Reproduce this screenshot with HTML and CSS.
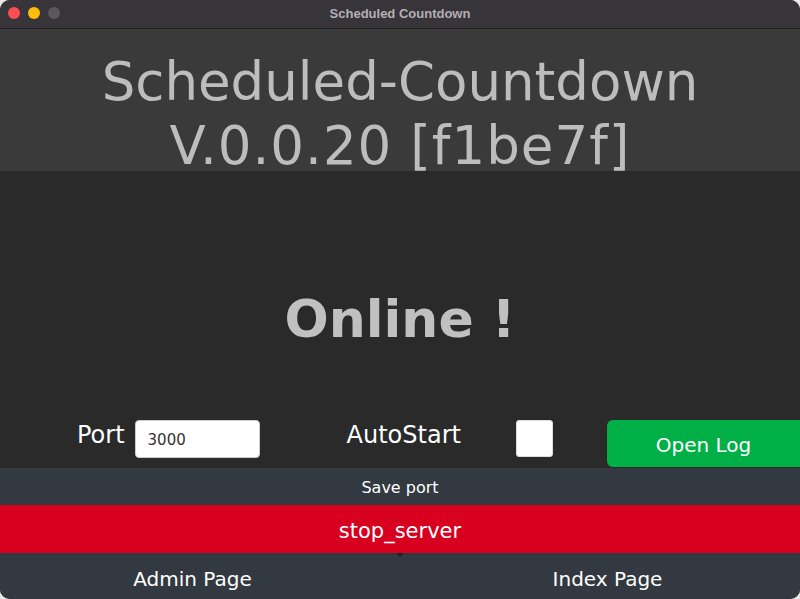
FILE: index.html
```html
<!DOCTYPE html>
<html>
<head>
<meta charset="utf-8">
<link rel="stylesheet" href="styles.css">
</head>
<body>
<div class="window">
  <div class="titlebar">
    <div class="lights">
      <span class="light red"></span>
      <span class="light yellow"></span>
      <span class="light gray"></span>
    </div>
    <div class="wtitle">Scheduled Countdown</div>
  </div>
  <div class="header">
    <div class="htext">Scheduled-Countdown<br><span class="ver">V.0.0.20 [f1be7f]</span></div>
  </div>
  <div class="status">Online !</div>
  <div class="controls">
    <div class="field port">
      <span class="label">Port</span>
      <input class="input" type="text" value="3000">
    </div>
    <div class="field auto">
      <span class="label">AutoStart</span>
      <span class="check"></span>
    </div>
    <button class="openlog">Open Log</button>
  </div>
  <div class="save">Save port</div>
  <div class="stop">stop_server<span class="tip"></span></div>
  <div class="links">
    <div class="link">Admin Page</div>
    <div class="link">Index Page</div>
  </div>
</div>
</body>
</html>
```
FILE: styles.css
```css
* { box-sizing: border-box; }
html, body { margin: 0; padding: 0; background: #e8e8e8; }
body { width: 800px; height: 599px; overflow: hidden; font-family: "DejaVu Sans", sans-serif; }
.window {
  width: 800px; height: 599px;
  border-radius: 10px;
  overflow: hidden;
  background: #2a2a2a;
  display: flex; flex-direction: column;
}
.titlebar {
  height: 29px; flex: none;
  background: #38353a;
  border-bottom: 1px solid #1e1e1e;
  position: relative;
  display: flex; align-items: center; justify-content: center;
}
.lights { position: absolute; left: 8px; top: 7px; display: flex; gap: 8px; }
.light { width: 12px; height: 12px; border-radius: 50%; display: block; }
.red { background: #fe4c55; }
.yellow { background: #febd0a; }
.gray { background: #5b585c; }
.wtitle {
  font-family: "Liberation Sans", Arial, sans-serif;
  font-weight: bold; font-size: 13px; color: #b3afb4;
  margin-top: -1px;
}
.header {
  height: 142px; flex: none;
  background: #3a3a3a;
  display: flex; justify-content: center;
}
.htext {
  font-family: "DejaVu Sans", sans-serif;
  font-size: 53px; line-height: 64px; color: #bdbdbd;
  text-align: center;
  padding-top: 21px;
  white-space: nowrap;
}
.ver { letter-spacing: 1px; }
.status {
  height: 241px; flex: none;
  display: flex; align-items: center; justify-content: center;
  padding-top: 55px;
  font-family: "DejaVu Sans", sans-serif;
  font-weight: bold; font-size: 52px; color: #c0c0c0;
}
.controls {
  height: 56px; flex: none;
  display: flex; align-items: flex-start;
  padding-top: 8px;
}
.field { display: flex; align-items: center; }
.label { color: #ffffff; font-size: 24px; }
.port { margin-left: 77px; }
.port .label { margin-right: 10px; margin-top: -8px; }
.input {
  width: 125px; height: 38px;
  border: 1px solid #ccc; border-radius: 4px;
  background: #fff; color: #333;
  font-family: "DejaVu Sans", sans-serif;
  font-size: 15px; padding: 2px 0 0 12px;
  outline: none;
}
.auto { margin-left: 87px; }
.auto .label { margin-top: -8px; margin-right: 55px; }
.check {
  display: block; width: 37px; height: 37px;
  background: #fff; border: 1px solid #ddd; border-radius: 3px;
}
.openlog {
  margin-left: auto;
  width: 193px; height: 47px;
  background: #00b047; color: #fff;
  border: none; border-radius: 6px 0 0 6px;
  font-family: "DejaVu Sans", sans-serif;
  font-size: 20px; padding: 2px 0 0;
}
.save {
  height: 37px; flex: none;
  background: #333941;
  color: #fff; font-size: 16px;
  display: flex; align-items: center; justify-content: center;
  padding-top: 1px;
}
.stop {
  height: 48px; flex: none;
  background: #d7001e;
  color: #fff; font-size: 21px;
  display: flex; align-items: center; justify-content: center;
  padding-top: 4px;
  position: relative;
}
.tip {
  position: absolute; left: 396px; bottom: -4px;
  width: 0; height: 0;
  border-left: 4px solid transparent; border-right: 4px solid transparent;
  border-top: 4px solid #222;
}
.links {
  flex: 1;
  background: #333941;
  display: grid; grid-template-columns: 1fr 1fr; column-gap: 30px;
}
.link {
  color: #fff; font-size: 20px;
  display: flex; align-items: center; justify-content: center;
  padding-top: 6px;
}
```
